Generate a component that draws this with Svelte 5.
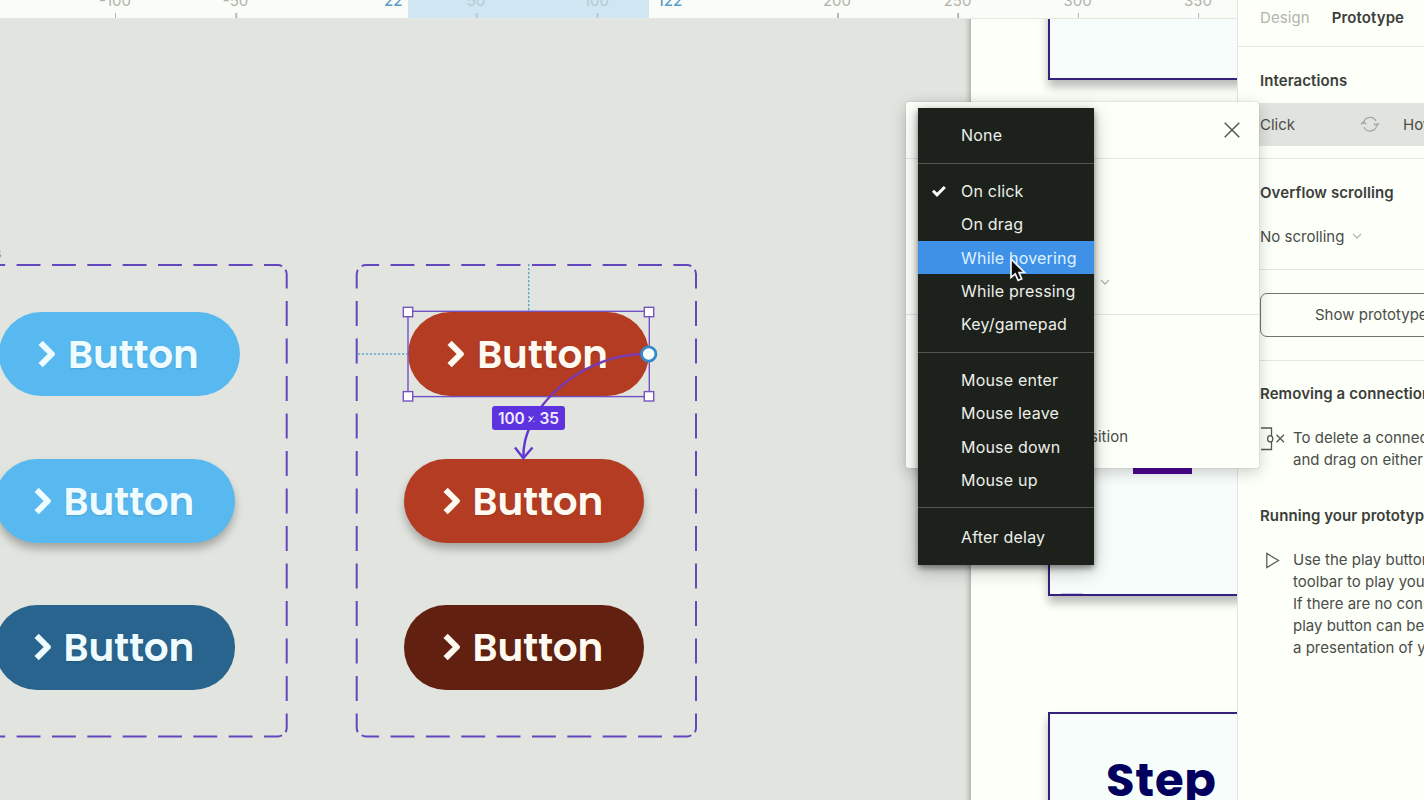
<script>
  const ticks = [
    { x: 115, label: '-100' },
    { x: 235.5, label: '-50' },
    { x: 476, label: '50', dim: true },
    { x: 596.5, label: '100', dim: true },
    { x: 837, label: '200' },
    { x: 957.5, label: '250' },
    { x: 1077.5, label: '300' },
    { x: 1198, label: '350' }
  ];
  const buttons = [
    { x: -1, y: 311.5, tone: 'sky' },
    { x: -5.5, y: 458.7, tone: 'sky', raised: true },
    { x: -5.5, y: 605, tone: 'navy' },
    { x: 408.2, y: 311.5, tone: 'red' },
    { x: 403.5, y: 458.7, tone: 'red', raised: true },
    { x: 403.5, y: 605, tone: 'maroon' }
  ];
  const groups = [
    ['None'],
    ['On click', 'On drag', 'While hovering', 'While pressing', 'Key/gamepad'],
    ['Mouse enter', 'Mouse leave', 'Mouse down', 'Mouse up'],
    ['After delay']
  ];
  const handles = [[408, 312], [649, 312], [408, 396.3], [649, 396.3]];
  const guide = ['Use the play button in the', 'toolbar to play your prototype.', 'If there are no connections, the', 'play button can be used to play', 'a presentation of your frames.'];
</script>

<div class="app">
  <main class="canvas">
    <div class="artboard">
      <div class="card first"></div>
      <div class="card second"><i class="bar"></i><i class="faint"></i></div>
      <div class="card third">Step</div>
    </div>
    <span class="layer-name">Buttons</span>

    {#each buttons as b}
      <div class="pill {b.tone}" class:raised={b.raised} style="left:{b.x}px;top:{b.y}px">
        <svg width="20" height="30" viewBox="0 0 20 30"><path d="M3.6 3.8 14.8 15 3.6 26.2" /></svg>
        <span>Button</span>
      </div>
    {/each}

    <svg class="overlay" width="1237" height="800" viewBox="0 0 1237 800">
      <defs>
        <g id="dashed-frame" fill="none" stroke="#6446bd" stroke-width="2">
          <path d="M361.7 266.2Q363.5 264.9 366 264.9H687Q689.5 264.9 691.3 266.2" stroke-dasharray="23.9 11.45" stroke-dashoffset="6.3" />
          <path d="M361.7 735.3Q363.5 736.6 366 736.6H687Q689.5 736.6 691.3 735.3" stroke-dasharray="23.9 11.45" stroke-dashoffset="6.3" />
          <path d="M358 269.8Q356.7 271.5 356.7 274V728Q356.7 730.5 358 732" stroke-dasharray="25 12.5" stroke-dashoffset="6" />
          <path d="M694.7 269.8Q696 271.5 696 274V728Q696 730.5 694.7 732" stroke-dasharray="25 12.5" stroke-dashoffset="6" />
        </g>
      </defs>
      <use href="#dashed-frame" />
      <use href="#dashed-frame" x="-409.3" />
      <path d="M528.7 264V311M358 354H407" fill="none" stroke="#60a5c8" stroke-width="1.4" stroke-dasharray="2.2 1.8" />
      <rect x="408" y="311.3" width="241.3" height="85.3" fill="none" stroke="#7350c4" stroke-width="1.4" />
      {#each handles as [x, y]}
        <rect x={x - 4.7} y={y - 4.7} width="9.4" height="9.4" fill="#fdfdff" stroke="#7554bc" stroke-width="1.4" />
      {/each}
    </svg>
    <div class="size-badge"><small>×</small></div>
    <svg class="overlay" width="1237" height="800" viewBox="0 0 1237 800">
      <path d="M641 354C585 357 546 394 532 422C525 437 523.300 446 523.300 458" fill="none" stroke="url(#connector)" stroke-width="2.4" />
      <path d="M515 447.500 523.300 458.200 532.500 447.500" fill="none" stroke="#6037cf" stroke-width="2.4" />
      <defs>
        <linearGradient id="connector" gradientUnits="userSpaceOnUse" x1="0" y1="354" x2="0" y2="458"><stop offset="0" stop-color="#7b3caf" /><stop offset=".45" stop-color="#7138bd" /><stop offset=".52" stop-color="#5d32df" /><stop offset="1" stop-color="#6037cf" /></linearGradient>
      </defs>
      <circle cx="648.700" cy="354" r="7.200" fill="#f7fdff" stroke="#3589c9" stroke-width="2.800" />
    </svg>
    <div class="badge-text"><span>100</span><span>35</span></div>

    <div class="ruler">
      <div class="range"></div>
      {#each ticks as t}
        <span class="tick" class:dim={t.dim} style="left:{t.x}px">{t.label}</span>
      {/each}
      <b class="start">22</b><b class="end">122</b>
    </div>
  </main>

  <aside>
    <header><span>Design</span><b>Prototype</b></header>
    <section class="interactions">
      <h2>Interactions</h2>
      <div class="interaction">
        <span>Click</span>
        <svg width="20" height="18" viewBox="0 0 20 18" fill="none" stroke="#a7aaa5" stroke-width="1.4"><path d="M3.5 9A6.700 6.700 0 0 1 16 5.800M16.700 8.500A6.700 6.700 0 0 1 4 12.200M1 9.500 3.500 6.800 6.300 9.300M13.700 8.400 16.600 11 19 8.200" /></svg>
        <span>Hover</span>
      </div>
    </section>
    <section class="overflow">
      <h2>Overflow scrolling</h2>
      <p>No scrolling <svg width="10" height="7" viewBox="0 0 10 7"><path d="m1 1 4 4 4-4" fill="none" stroke="#b3b6b0" stroke-width="1.300" /></svg></p>
    </section>
    <section class="settings"><button>Show prototype settings</button></section>
    <section class="help">
      <h2>Removing a connection</h2>
      <div class="tip">
        <svg width="26" height="24" viewBox="0 0 26 24" fill="none" stroke="#555852" stroke-width="1.300"><path d="M1 1H11.500V9M11.500 15V22.500H1M16.500 7.800 24 15.300M24 7.800 16.500 15.300" /><ellipse cx="10.200" cy="11.800" rx="2.600" ry="3.200" /></svg>
        <p>To delete a connection, click<br />and drag on either end.</p>
      </div>
      <h2 class="running">Running your prototype</h2>
      <div class="tip play">
        <svg width="26" height="24" viewBox="0 0 26 24"><path d="M6.800 4.500V18.500L18.600 11.500Z" fill="none" stroke="#5b5e59" stroke-width="1.300" /></svg>
        <p>{#each guide as line}{line}<br />{/each}</p>
      </div>
    </section>
  </aside>

  <div class="popup">
    <div class="popup-head"><svg width="18" height="18" viewBox="0 0 18 18"><path d="m1.700 1.700 14.600 14.600M16.300 1.700 1.700 16.300" fill="none" stroke="#555853" stroke-width="1.500" /></svg></div>
    <div class="popup-body"><svg width="10" height="7" viewBox="0 0 10 7"><path d="m1 1 4 4 4-4" fill="none" stroke="#b3b6b0" stroke-width="1.300" /></svg></div>
    <div class="popup-foot">State transition</div>
  </div>

  <div class="menu">
    {#each groups as group}
      <div class="group">
        {#each group as item}
          <div class="item" class:active={item === 'While hovering'}>
            {#if item === 'On click'}<svg width="16" height="14" viewBox="0 0 16 14"><path d="m2 6.800 4 4L13.800 3" fill="none" stroke="#fff" stroke-width="3" /></svg>{/if}
            <span>{item}</span>
          </div>
        {/each}
      </div>
    {/each}
  </div>

  <svg class="cursor" width="20" height="28" viewBox="0 0 20 28"><path d="M2 2V20.500L6.300 16.800 9.100 23.300 12.700 21.800 10 15.500H15.500Z" fill="#0b0b0b" stroke="#eef2f6" stroke-width="1.700" /></svg>
</div>

<style>
  :global(body) { margin: 0; overflow: hidden; }
  .app { position: relative; display: grid; grid-template-columns: 1237px 187px; width: 1424px; height: 800px; overflow: hidden; font-family: Inter, "Liberation Sans", sans-serif; color: #4a4d48; }
  .app * { box-sizing: border-box; }
  svg { flex: none; }
  .canvas { position: relative; overflow: hidden; background: #e1e4df; }
  .overlay { position: absolute; left: 0; top: 0; }
  .ruler { position: absolute; inset: 0 0 auto; height: 18.500px; background: #fafcf7; border-bottom: 1px solid #e6e8e4; }
  .range { position: absolute; left: 408px; width: 241px; height: 18px; background: #d0e6f3; }
  .tick { position: absolute; top: -8px; height: 26px; line-height: 18px; font-size: 15px; color: #b0b3ae; transform: translateX(-50%); }
  .tick::after { content: ""; position: absolute; left: 50%; bottom: 0; width: 1.500px; height: 5px; background: #b6b8b4; }
  .tick.dim { color: #b7c9d2; }
  .tick.dim::after { background: #b7c9d2; }
  .ruler b { position: absolute; top: -8px; font-size: 15px; line-height: 18px; font-weight: 500; color: #5b9ecb; }
  .start { left: 384px; }
  .end { left: 657.500px; }
  .layer-name { position: absolute; right: 1235.500px; top: 244px; font-size: 14px; line-height: 18px; color: #858883; }

  .pill { position: absolute; display: flex; align-items: center; width: 240.500px; height: 84.500px; padding: 0 0 0 38px; border-radius: 42px; color: #fffaf1; font: 600 39px/84px Poppins, Inter, sans-serif; letter-spacing: -.2px; text-shadow: 0 1px 2px #0002; }
  .pill span { margin-left: 11px; transform: translateY(1px); }
  .pill path { fill: none; stroke: currentColor; stroke-width: 6; stroke-linejoin: round; }
  .sky { background: #57b9ef; color: #effcff; }
  .navy { background: #28648d; color: #effcff; }
  .red { background: #b43c23; }
  .maroon { background: #622110; }
  .raised { box-shadow: 0 6px 9px #0004; }

  .size-badge, .badge-text { position: absolute; left: 492px; top: 406px; display: flex; align-items: center; justify-content: space-between; width: 73px; height: 24px; padding: 0 6px; border-radius: 3px; font-size: 15.500px; font-weight: 600; letter-spacing: -.1px; color: #f1eaff; }
  .size-badge { padding-left: 35px; background: #5d32df; }
  .size-badge small { font-size: 13px; font-weight: 500; }

  .artboard { position: absolute; left: 971px; top: 0; width: 300px; height: 820px; background: #fdfff9; box-shadow: 0 0 7px #0006; }
  .card { position: absolute; left: 77px; width: 230px; border: 2px solid #34217d; background: #f7fdfa; box-shadow: 0 7px 9px #0004; }
  .first { top: -40px; height: 120px; }
  .second { top: 200px; height: 396px; }
  .third { top: 711.500px; height: 150px; padding: 33px 0 0 56px; color: #02005f; font: 700 46.500px/66px Poppins, Inter, sans-serif; letter-spacing: .7px; }
  .bar { position: absolute; left: 83px; top: 260px; width: 59px; height: 12px; background: #4b078f; }
  .faint { position: absolute; left: 11px; bottom: 0; width: 22px; height: 1px; background: #c9c3f1; }

  aside { position: relative; overflow: hidden; background: #fdfff9; border-left: 1px solid #e2e4df; font-size: 15px; white-space: nowrap; }
  header { display: flex; gap: 22px; align-items: center; height: 46.500px; padding: 0 0 10px 22px; border-bottom: 1.500px solid #e4e6e1; letter-spacing: .1px; }
  header span { color: #b1b4af; }
  header b, h2 { font-weight: 600; color: #3b3e39; }
  h2 { margin: 0; padding-left: 22px; font-size: 15px; line-height: 22px; letter-spacing: .08px; }
  section { border-bottom: 1px solid #e3e5e0; }
  .interactions { height: 112px; padding-top: 23px; }
  .interaction { display: flex; align-items: center; height: 43px; margin-top: 11px; padding-left: 22px; background: #e1e3de; }
  .interaction span { flex: none; }
  .interaction span:first-child { width: 100px; }
  .interaction span:last-child { margin-left: 23px; }
  .overflow { height: 111px; padding-top: 23px; }
  p { margin: 0; line-height: 22.100px; }
  .overflow p { display: flex; align-items: center; gap: 8px; margin-top: 22px; padding-left: 22px; }
  .settings { height: 91px; padding: 23px 0 0 22px; }
  button { display: block; width: 240px; height: 44px; padding: 0 0 0 54px; border: 1.500px solid #70736e; border-radius: 7px; background: none; font: inherit; color: inherit; text-align: left; }
  .help { padding-top: 22.500px; border: 0; }
  .tip { display: flex; padding-left: 22px; margin-top: 22px; }
  .tip p { margin-left: 7px; }
  .running { margin-top: 33.500px; }

  .popup { position: absolute; left: 906px; top: 102px; display: flex; flex-direction: column; width: 353px; height: 365.500px; background: #fdfff9; border-radius: 2px; box-shadow: 0 0 1px #0006, 0 4px 16px #0003; }
  .popup-head { display: flex; align-items: center; justify-content: flex-end; height: 56.500px; padding-right: 18px; border-bottom: 1px solid #e3e5e0; }
  .popup-body { height: 156px; padding: 120px 0 0 194px; border-bottom: 1px solid #e3e5e0; line-height: 0; }
  .popup-foot { padding: 111px 131px 0 0; font-size: 15px; line-height: 22px; text-align: right; }

  .menu { position: absolute; left: 917.500px; top: 107.500px; width: 176px; height: 457px; background: #1d211b; box-shadow: 0 3px 6px #0006, 0 5px 18px #0004; color: #ecefea; font-size: 16px; letter-spacing: .2px; }
  .group { padding: 11px 0; border-bottom: 1.500px solid #51544f; }
  .group:first-child .item { padding-bottom: 1px; }
  .group:last-child { padding-top: 12px; border: 0; }
  .item { display: grid; grid-template-columns: 22px 1fr; align-items: center; height: 33.200px; padding-left: 13px; }
  .item span { grid-column: 2; padding-left: 8.500px; }
  .item.active { background: #3f91e8; color: #def1ff; }
  .cursor { position: absolute; left: 1009px; top: 257px; }
</style>
